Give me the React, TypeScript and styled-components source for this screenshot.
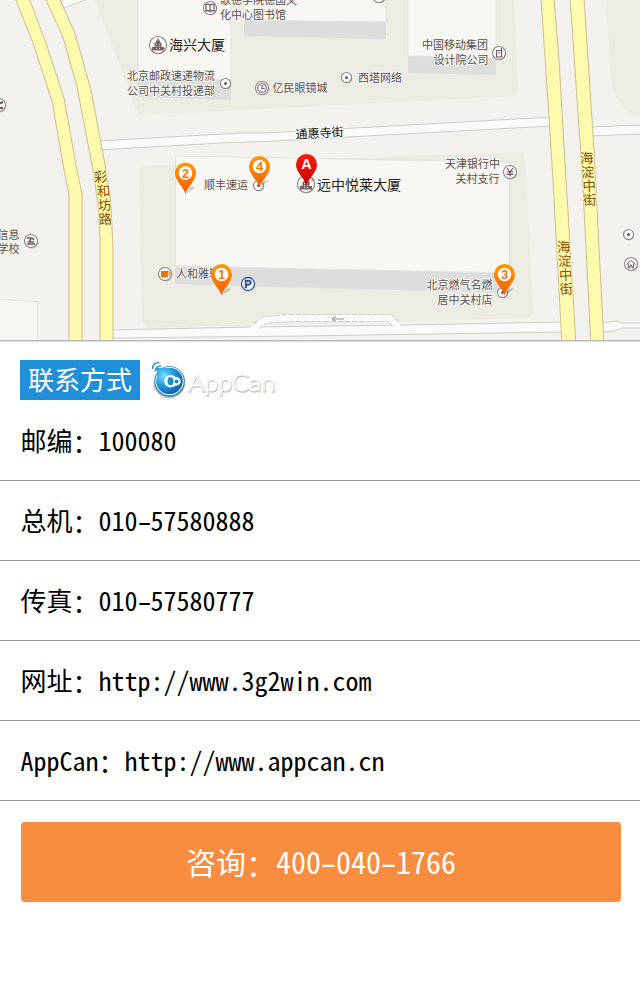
import React from "react";
import styled, { createGlobalStyle } from "styled-components";

const GlobalStyle = createGlobalStyle`
  * { box-sizing: border-box; }
  body { margin: 0; background: #fff; }
`;

const Page = styled.main`
  width: 640px;
  min-height: 1008px;
  background: #fff;
  color: #000;
  font-family: "Noto Sans CJK SC", "Liberation Sans", sans-serif;
  font-feature-settings: "hwid";
`;

const MapPanel = styled.section`
  height: 342px;
  overflow: hidden;
  border-bottom: 1px solid #dcdcdc;
  svg { display: block; }
`;

const Heading = styled.header`
  display: flex;
  align-items: center;
  gap: 10px;
  height: 59px;
  padding: 17px 20px 0;
`;

const Badge = styled.h1`
  width: 120px;
  height: 40px;
  margin: 0;
  background: #218fd8;
  color: #fff;
  font-size: 26px;
  font-weight: 400;
  line-height: 38px;
  text-align: center;
`;

const List = styled.ul`
  margin: 0;
  padding: 0;
  list-style: none;
`;

const Row = styled.li`
  height: 80px;
  padding: 0 20.5px;
  border-bottom: 1px solid #9c9c9c;
  font-size: 26px;
  line-height: 77px;
  white-space: pre;
`;

const Colon = styled.span`
  line-height: 0;
  vertical-align: -2px;
`;

const Dash = styled.span`
  display: inline-block;
  transform: scaleX(1.4);
`;

const CallButton = styled.button`
  display: block;
  width: 600px;
  height: 80px;
  margin: 21px 0 0 21px;
  padding: 0 0 2px;
  border: 0;
  border-radius: 4px;
  background: #f88d3f;
  color: #fff;
  font: inherit;
  font-feature-settings: "hwid";
  font-size: 30px;
  line-height: 78px;
  text-align: center;
`;

const Label = styled.text<{ $size?: number; $fill?: string; $halo?: string }>`
  font-size: ${(p) => p.$size ?? 11}px;
  fill: ${(p) => p.$fill ?? "#594f4d"};
  stroke: ${(p) => p.$halo ?? "#f8f7f4"};
  stroke-width: 2px;
  stroke-linejoin: round;
  paint-order: stroke;
`;

const PinText = styled.text`
  font-family: "Liberation Sans", sans-serif;
  font-weight: 700;
  text-anchor: middle;
`;

const Brand = styled.text`
  font-family: Lato, sans-serif;
  font-weight: 300;
  font-size: 23px;
`;

function Poi({ x, y, r = 6.5, children }: { x: number; y: number; r?: number; children?: React.ReactNode }) {
  return (
    <g transform={`translate(${x} ${y})`}>
      <circle cx="0.8" cy="1" r={r} fill="#00000030" />
      <circle r={r} fill="#fff" stroke="#8f8282" strokeWidth="1.1" />
      {children ?? <circle r="1.5" fill="#6d5757" />}
    </g>
  );
}

function Pin({ x, y, mark }: { x: number; y: number; mark: string }) {
  const red = mark === "A";
  return (
    <g transform={`translate(${x} ${y})`}>
      <path d="M0 21 L10 14 L5 14Z" fill="#00000030" />
      <path
        d="M0 21 C-1.5 14 -10.5 8 -10.5 0 A10.5 10.5 0 0 1 10.5 0 C10.5 8 1.5 14 0 21Z"
        fill={red ? "url(#redPin)" : "url(#orangePin)"}
      />
      {!red && <circle r="6.8" fill="#fff" />}
      <PinText y={red ? 4.8 : 4.5} fontSize={red ? 14.5 : 13} fill={red ? "#fff" : "#f47a00"}>{mark}</PinText>
    </g>
  );
}

function Building() {
  return (
    <>
      <path d="M-6 5.500V2H-3.500V-2.500H-2V-4.500H-0.700V-6.500H0.700V-4.500H2V-2.500H3.500V2H6V5.500Z" fill="#7b6262" />
      <path d="M-1.500 -1V4M1.500 -1V4" stroke="#fff" strokeWidth="0.800" strokeDasharray="1 1" />
    </>
  );
}

function Vertical({ chars, points, angle }: { chars: string; points: number[][]; angle: number }) {
  return (
    <>
      {points.map(([x, y], i) => (
        <Label key={i} $size={13.5} $fill="#875005" $halo="#fffbab" textAnchor="middle" transform={`translate(${x} ${y + 5}) rotate(${angle})`}>
          {chars[i]}
        </Label>
      ))}
    </>
  );
}

function StreetMap() {
  return (
    <svg width="640" height="341" viewBox="0 0 640 341">
      <defs>
        <linearGradient id="orangePin" x1="0" y1="0" x2="0" y2="1">
          <stop offset="0" stopColor="#ff9c00" />
          <stop offset="1" stopColor="#f45c00" />
        </linearGradient>
        <linearGradient id="redPin" x1="0" y1="0" x2="0" y2="1">
          <stop offset="0" stopColor="#ff1a0a" />
          <stop offset="1" stopColor="#c00000" />
        </linearGradient>
      </defs>
      <rect width="640" height="341" fill="#f3f2ef" />
      <g fill="#ecece4">
        <path d="M95 0L137 111Q138 115 143 115L513 96Q518 95 518 89L514 0Z" />
        <path d="M606 0L611 82C613 96 625 111 633 116H640V0Z" />
        <path d="M139 170Q139 167 143 166L518 152Q524 152 525 158L533 303Q533 314 529 318L146 328L142 320Z" />
      </g>
      <g fill="#ddd">
        <path d="M138 77L231 80V100L138 97Z" />
        <path d="M244 20L386 22V39L244 36Z" />
        <path d="M408 56L496 57V75L408 73Z" />
        <path d="M175 266L509 273V293L175 284Z" />
      </g>
      <g fill="#f8f7f4" stroke="#e2e2de" strokeWidth="1">
        <path d="M138 -2H231V80L138 77Z" />
        <path d="M244 -2H386V22L244 20Z" />
        <path d="M408 -2H496V58L408 56Z" />
        <path d="M175.500 156L509.500 162V273L175.500 266Z" />
        <path d="M-1 299.500L37.500 301.500V342H-1Z" />
      </g>
      <g fill="#fafafa" stroke="#cfcdc9" strokeWidth="1">
        <path d="M61 1L90 -10L96 -4L64 8Z" />
        <path d="M98 141L240 133H265L552 117V126L265 141.500L230 142.500L98 150Z" />
        <path d="M590 127L642 125V134L590 136Z" />
        <path d="M110 330L252 327L404 325L565 322V332L300 336L110 338Z" />
        <path d="M600 323L617 321L622 323H642V328H622L616 331L600 332Z" />
      </g>
      <path d="M256 326L264 320L290 318H390L398 326" fill="none" stroke="#cccac6" strokeWidth="7.500" strokeDasharray="5 2" />
      <path d="M252 330L264 320L290 318H390L401 330" fill="none" stroke="#fafafa" strokeWidth="6" />
      <path d="M344 319H332M336 316.500L332 319L336 321.500" fill="none" stroke="#999" />
      <g fill="#fffbae" stroke="#cdbd8d" strokeWidth="1">
        <path d="M15 -2L33 43L52 101L64 170L69 194V345H82V194L76 165L64 98L46 43L29 -2Z" />
        <path d="M45 -2L63 37L77 87L94 175L98 205L100 240V345H113V250L111 205L106 170L91 90L75 33L59 -2Z" />
        <path d="M541 -2L549 117L553 180L562 345H576L566 180L559 60L554 -2Z" />
        <path d="M570 -2L582 170L591 345H604L594 150L584 -2Z" />
      </g>

      <Vertical chars="彩和坊路" points={[[101, 177], [104, 191], [105, 205], [105.5, 219]]} angle={-4} />
      <Vertical chars="海淀中街" points={[[587, 158], [588, 172], [589.5, 186], [590, 200]]} angle={-3} />
      <Vertical chars="海淀中街" points={[[564, 247], [565, 261], [566, 275], [566.5, 289]]} angle={-3} />

      <Label x="220" y="4">歌德学院德国文</Label>
      <Label x="220" y="19">化中心图书馆</Label>
      <Label x="169" y="50" $size={14} $fill="#2a2423">海兴大厦</Label>
      <Label x="127" y="80">北京邮政速递物流</Label>
      <Label x="127" y="95">公司中关村投递部</Label>
      <Label x="272.500" y="91.500">亿民眼镜城</Label>
      <Label x="358" y="82">西塔网络</Label>
      <Label x="422" y="49">中国移动集团</Label>
      <Label x="433.500" y="64">设计院公司</Label>
      <Label x="295.500" y="137.500" $size={12} $fill="#111" $halo="#fff" transform="rotate(-3 319 134)">通惠寺街</Label>
      <Label x="445" y="168">天津银行中</Label>
      <Label x="455.500" y="183">关村支行</Label>
      <Label x="204" y="189">顺丰速运</Label>
      <Label x="317" y="189.500" $size={14} $fill="#2a2423">远中悦莱大厦</Label>
      <Label x="176" y="277.500">人和雅轩</Label>
      <Label x="426.500" y="289">北京燃气名燃</Label>
      <Label x="437.500" y="304">居中关村店</Label>
      <Label x="-2.500" y="238.500">信息</Label>
      <Label x="-2.500" y="252.500">学校</Label>

      <Poi x={210} y={8}>
        <path d="M0 -3C-2-4-3-4-4-3.500V3C-3 2.500-2 2.500 0 3.500C2 2.500 3 2.500 4 3V-3.500C3-4 2-4 0-3V3" fill="none" stroke="#6d5757" strokeWidth="1.200" />
      </Poi>
      <Poi x={379} y={-4} />
      <Poi x={158} y={45} r={8.5}><Building /></Poi>
      <Poi x={225.500} y={83.500} r={5} />
      <Poi x={346.500} y={77.500} r={5} />
      <Poi x={262} y={88}>
        <circle r="4.300" fill="none" stroke="#6d5757" />
        <path d="M0 -3V0.500H2.500" fill="none" stroke="#6d5757" strokeWidth="1.200" />
      </Poi>
      <Poi x={499} y={53}>
        <path d="M-2.500 -2.500H2.500V4H-2.500ZM2.500 -2.500V-5" fill="none" stroke="#6d5757" strokeWidth="1.200" />
        <path d="M-1 0H1" stroke="#6d5757" />
      </Poi>
      <Poi x={510} y={172}>
        <path d="M-3 -4L0 0L3 -4M0 0V4.500M-3.500 0H3.500M-3.500 2.300H3.500" fill="none" stroke="#6d5757" strokeWidth="1.200" />
      </Poi>
      <Poi x={-1} y={105}>
        <path d="M-4 -2H2L4 -3M-4 3H4" stroke="#6d5757" strokeWidth="2" fill="none" />
      </Poi>
      <Poi x={31} y={241}>
        <path d="M-4 -3H1L3 -1M0 -2L-2 1H3M-4 3H4" stroke="#6d5757" strokeWidth="1.600" fill="none" />
      </Poi>
      <Poi x={628.500} y={234.500} r={5} />
      <Poi x={631} y={264}>
        <path d="M-4.500 0.500L0 -3.500L4.500 0.500M-2.700 -0.500V4H-1V1.500H1V4H2.700V-0.500" stroke="#6d5757" fill="none" />
      </Poi>
      <Poi x={165} y={274}>
        <path d="M-4 -3H3V2Q3 3.500 1.500 3.500H-2.500Q-4 3.500 -4 2Z" fill="#e87803" />
        <path d="M3 -2H5V1H3" fill="none" stroke="#e87803" />
      </Poi>
      <Poi x={306} y={184} r={8.5}><Building /></Poi>
      <Poi x={258.500} y={185.500} r={5} />
      <Poi x={502.500} y={292.500} r={5} />
      <g transform="translate(248 284)">
        <circle r="6.500" fill="#fff" stroke="#2458a8" strokeWidth="1.300" />
        <PinText y="4" fontSize="11" fill="#1c4fa5" stroke="#1c4fa5" strokeWidth="0.400">P</PinText>
      </g>

      <Pin x={185.500} y={173} mark="2" />
      <Pin x={259.500} y={166.500} mark="4" />
      <Pin x={306.500} y={164.500} mark="A" />
      <Pin x={221.500} y={274.500} mark="1" />
      <Pin x={504.500} y={274.500} mark="3" />
      <rect y="340" width="640" height="1" fill="#b9b9b9" />
    </svg>
  );
}

function Logo() {
  return (
    <svg width="128" height="42" viewBox="150 360 128 42">
      <defs>
        <radialGradient id="orb" cx="0.3" cy="0.3" r="0.8">
          <stop offset="0" stopColor="#7fdcff" />
          <stop offset="0.5" stopColor="#1d97dc" />
          <stop offset="1" stopColor="#0a5ca8" />
        </radialGradient>
      </defs>
      <path d="M152.500 370C152.500 366 155 363.500 159.500 363.500M155 372.500C155.500 369 158 367 161 367" fill="none" stroke="#3c93c4" strokeWidth="1.500" />
      <circle cx="169.500" cy="383.500" r="16" fill="#c4c4c4" />
      <circle cx="169.500" cy="382.500" r="15.200" fill="#1976b6" />
      <circle cx="169.500" cy="382" r="13.700" fill="none" stroke="#d9eefa" strokeWidth="1.300" />
      <path d="M156 369L170 369A13 13 0 1 1 156.500 382Q157.500 374 156 369Z" fill="url(#orb)" />
      <path d="M170.500 376C173.500 376 174.500 378.200 176.500 378.200A4 4 0 0 1 176.500 386.600C174.500 386.600 173.500 388.500 170.500 388.500A6.250 6.250 0 0 1 170.500 376Z" fill="#fff" />
      <ellipse cx="170.500" cy="382.200" rx="3" ry="4" fill="#198bce" />
      <circle cx="176.500" cy="382.400" r="2" fill="#198bce" />
      <Brand x="188.500" y="393" textLength="87" lengthAdjust="spacingAndGlyphs" fill="#bcbcbc" stroke="#c6c6c6" strokeWidth="1.300">AppCan</Brand>
      <Brand x="188" y="392" textLength="87" lengthAdjust="spacingAndGlyphs" fill="#fff" stroke="#fff" strokeWidth="0.400" aria-hidden="true">AppCan</Brand>
    </svg>
  );
}

function Phone({ value }: { value: string }) {
  return (
    <>
      {value.split("-").map((part, i) => (
        <React.Fragment key={i}>
          {i > 0 && <Dash>-</Dash>}
          {part}
        </React.Fragment>
      ))}
    </>
  );
}

const contacts = [
  ["邮编", "100080"],
  ["总机", "010-57580888"],
  ["传真", "010-57580777"],
  ["网址", "http://www.3g2win.com"],
  ["AppCan", "http://www.appcan.cn"],
];

export default function App() {
  return (
    <Page>
      <GlobalStyle />
      <MapPanel><StreetMap /></MapPanel>
      <Heading>
        <Badge>联系方式</Badge>
        <Logo />
      </Heading>
      <List>
        {contacts.map(([name, value]) => (
          <Row key={name}>
            {name}
            <Colon>：</Colon>
            <Phone value={value} />
          </Row>
        ))}
      </List>
      <CallButton>
        咨询<Colon>：</Colon>
        <Phone value="400-040-1766" />
      </CallButton>
    </Page>
  );
}
